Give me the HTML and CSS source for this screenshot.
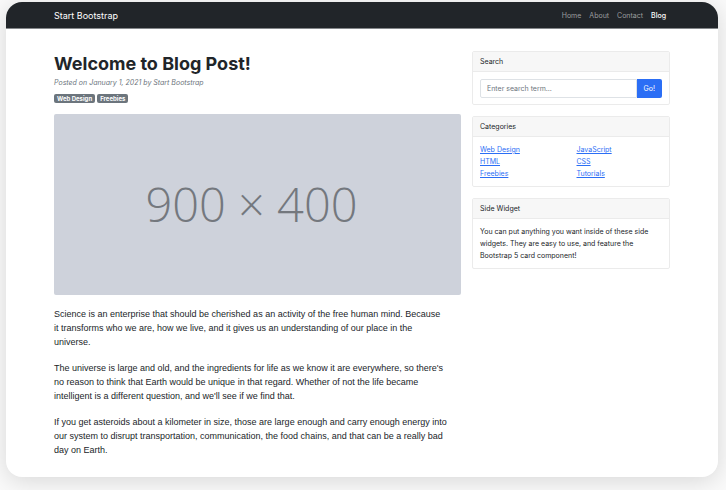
FILE: index.html
```html
<!DOCTYPE html>
<html lang="en">
<head>
<meta charset="utf-8">
<title>Blog Post - Start Bootstrap</title>
<link rel="stylesheet" href="styles.css">
</head>
<body>
<div class="window">
  <header class="navbar">
    <a class="brand" href="#">Start Bootstrap</a>
    <nav class="nav">
      <a href="#">Home</a>
      <a href="#">About</a>
      <a href="#">Contact</a>
      <a class="active" href="#" aria-current="page">Blog</a>
    </nav>
  </header>
  <div class="layout">
    <main>
      <article>
        <h1>Welcome to Blog Post!</h1>
        <div class="meta">Posted on January 1, 2021 by Start Bootstrap</div>
        <div class="tags"><a class="badge" href="#">Web Design</a><a class="badge" href="#">Freebies</a></div>
        <figure class="placeholder">900 × 400</figure>
        <p>Science is an enterprise that should be cherished as an activity of the free human mind. Because<br>it transforms who we are, how we live, and it gives us an understanding of our place in the<br>universe.</p>
        <p>The universe is large and old, and the ingredients for life as we know it are everywhere, so there's<br>no reason to think that Earth would be unique in that regard. Whether of not the life became<br>intelligent is a different question, and we'll see if we find that.</p>
        <p>If you get asteroids about a kilometer in size, those are large enough and carry enough energy into<br>our system to disrupt transportation, communication, the food chains, and that can be a really bad<br>day on Earth.</p>
      </article>
    </main>
    <aside class="sidebar">
      <section class="card">
        <label class="card-header" for="search">Search</label>
        <form class="card-body search">
          <input id="search" type="text" placeholder="Enter search term...">
          <button type="button">Go!</button>
        </form>
      </section>
      <section class="card">
        <div class="card-header">Categories</div>
        <div class="card-body categories">
          <ul>
            <li><a href="#">Web Design</a></li>
            <li><a href="#">HTML</a></li>
            <li><a href="#">Freebies</a></li>
          </ul>
          <ul>
            <li><a href="#">JavaScript</a></li>
            <li><a href="#">CSS</a></li>
            <li><a href="#">Tutorials</a></li>
          </ul>
        </div>
      </section>
      <section class="card">
        <div class="card-header">Side Widget</div>
        <div class="card-body">You can put anything you want inside of these side widgets. They are easy to use, and feature the Bootstrap 5 card component!</div>
      </section>
    </aside>
  </div>
</div>
</body>
</html>
```
FILE: styles.css
```css
* {
  box-sizing: border-box;
}

body {
  margin: 0;
  padding: 2px 8px 13px 6px;
  background: #fafafa;
  color: #212529;
  font: 7px/12px Inter, "Liberation Sans", sans-serif;
}

.window {
  overflow: hidden;
  padding-bottom: 8px;
  border-radius: 16px;
  background: #fff;
  box-shadow: 0 4px 24px rgba(0, 0, 0, 0.14);
}

.navbar {
  display: flex;
  align-items: center;
  justify-content: space-between;
  height: 27px;
  padding: 1px 52px 0 48px;
  border-bottom: 1px solid #84878a;
  background: #212529;
}

.navbar a {
  color: #9b9d9e;
  text-decoration: none;
}

.navbar .brand {
  color: #fff;
  font-size: 9px;
}

.nav {
  display: flex;
  gap: 8px;
}

.nav .active {
  color: #fff;
  font-weight: 500;
}

.layout {
  display: grid;
  grid-template-columns: 37fr 18fr;
  gap: 11px;
  align-items: start;
  padding: 22px 48px 0;
}

h1 {
  margin: 0;
  font-size: 18px;
  font-weight: 700;
  line-height: 26px;
}

.meta {
  color: #6c757d;
  font-style: italic;
}

.tags {
  display: flex;
  gap: 2px;
  margin: 5px 0 11px;
}

.badge {
  padding: 0 3px;
  border-radius: 2px;
  background: #6c757d;
  color: #fff;
  font-size: 6px;
  font-weight: 700;
  line-height: 9px;
  text-decoration: none;
}

.placeholder {
  display: flex;
  align-items: center;
  justify-content: center;
  aspect-ratio: 9 / 4;
  margin: 0 0 12px;
  padding-right: 12px;
  border-radius: 2px;
  background: #ced2db;
  color: #74787e;
  font: 300 47px/64px "Open Sans", sans-serif;
}

p {
  margin: 0 0 12px;
  font: 9px/14px "Liberation Sans", sans-serif;
}

.sidebar {
  display: grid;
  gap: 11px;
}

.card {
  border: 1px solid #ebebeb;
  border-radius: 2px;
}

.card-header {
  display: block;
  padding: 4px 7px 3px;
  border-bottom: 1px solid #ebebeb;
  background: #f7f7f7;
}

.card-body {
  padding: 7px 7px 6px;
}

.search {
  display: flex;
}

.search input {
  flex: 1;
  min-width: 0;
  height: 19px;
  padding: 0 6px;
  border: 1px solid #dee2e6;
  border-radius: 2px 0 0 2px;
  color: inherit;
  font: inherit;
}

.search input::placeholder {
  color: #6c757d;
}

.search button {
  padding: 0 7px;
  border: 0;
  border-radius: 0 2px 2px 0;
  background: #2b6ef5;
  color: #fff;
  font: inherit;
}

.categories {
  display: grid;
  grid-template-columns: 1fr 1fr;
  gap: 11px;
}

ul {
  margin: 0;
  padding: 0;
  list-style: none;
}

.categories a {
  color: #2b6ef5;
}
```
